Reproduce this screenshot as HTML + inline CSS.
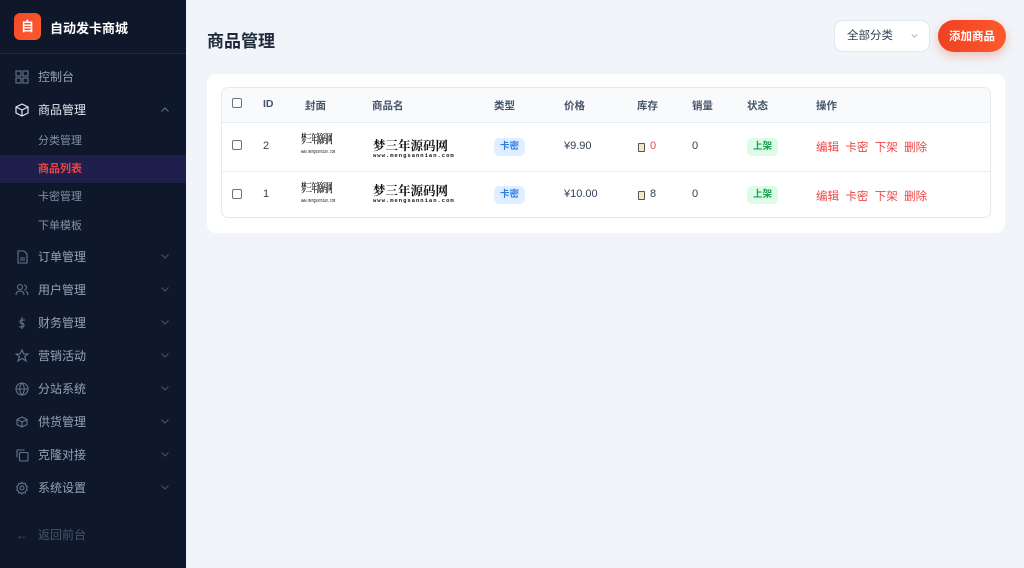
<!DOCTYPE html>
<html><head><meta charset="utf-8"><style>
*{margin:0;padding:0;box-sizing:border-box}
body{width:1024px;height:568px;overflow:hidden;background:#f1f4f9;font-family:"Liberation Sans","Noto Sans CJK SC",sans-serif;position:relative}
.sb{position:absolute;left:0;top:0;width:186px;height:568px;background:#0f172a}
.logo{position:absolute;left:14px;top:13px;width:27px;height:27px;border-radius:6px;background:linear-gradient(135deg,#f04a2a,#ff5a2c);color:#fff;font-weight:bold;font-size:13px;text-align:center;line-height:27px}
.brand{position:absolute;left:50px;top:18px;color:#fff;font-weight:bold;font-size:13px}
.div{position:absolute;left:0;top:53px;width:186px;height:1px;background:#1e293b}
.mi{position:absolute;left:0;width:186px;height:20px;color:#94a3b8;font-size:12px;line-height:20px}
.mi .ic{position:absolute;left:15px;top:3px;width:14px;height:14px}
.mi .t{position:absolute;left:38px}
.mi .ch{position:absolute;left:161px;top:7px;width:8px;height:5px}
.sub{position:absolute;left:0;width:186px;height:28px;line-height:28px;color:#8391a7;font-size:11px;padding-left:38px}
.main h1{position:absolute;left:207px;top:27px;font-size:17px;color:#1e293b;font-weight:bold}
.sel{position:absolute;left:834px;top:20px;width:96px;height:32px;background:#fff;border:1px solid #e2e8f0;border-radius:9px;font-size:11.5px;color:#334155;line-height:30px;padding-left:12px}
.btn{position:absolute;left:938px;top:20px;width:68px;height:32px;border-radius:16px;background:linear-gradient(90deg,#ee4022,#fe5a2e);color:#fff;font-size:11.5px;font-weight:bold;line-height:32px;text-align:center;box-shadow:0 4px 10px rgba(239,68,34,.3)}
.btn span{position:relative;top:1px}
.card{position:absolute;left:207px;top:74px;width:798px;height:159px;background:#fff;border-radius:9px}
.tb{position:absolute;left:221px;top:87px;width:770px;height:131px;border:1px solid #e5e9f0;border-radius:7px;overflow:hidden}
.hd{position:absolute;left:0;top:0;width:100%;height:35px;background:#f8fafc;border-bottom:1px solid #e8edf3}
.r2{position:absolute;left:0;top:83px;width:100%;height:1px;background:#e8edf3}
.c{position:absolute;font-size:11px;color:#334155;white-space:nowrap}
.h{font-weight:bold;color:#475569;font-size:10.5px}
.cb{position:absolute;width:10px;height:10px;border:1px solid #6b7280;border-radius:2px;background:#fff}
.tag{position:absolute;height:18px;line-height:18px;border-radius:5px;font-size:9.5px;font-weight:bold;padding:0 6px}
.blue{background:#e0efff;color:#2f7de0}
.green{background:#dcfce7;color:#16a34a}
.op{color:#ef4444;font-size:11.5px}
.cov{position:absolute;width:36px;height:26px;overflow:hidden;white-space:nowrap}
.cov b{display:block;font-family:"Noto Serif CJK SC",serif;font-size:12px;line-height:16px;color:#111;transform:scaleX(.47);transform-origin:0 0;letter-spacing:-1px}
.cov small{display:block;font-size:5px;font-family:"Liberation Mono",monospace;transform:scaleX(.6);transform-origin:0 0;color:#222;margin-top:2px}
.nm{position:absolute;font-size:12.5px;font-weight:bold;color:#111;font-family:"Noto Serif CJK SC",serif;line-height:13px;white-space:nowrap}
.nm small{display:block;font-size:5.5px;font-family:"Liberation Mono",monospace;letter-spacing:1px;line-height:7px}
.stk{position:absolute;width:7px;height:9px;border:1px solid #555;border-radius:1px;background:#f2e8c8}
</style></head><body>
<svg width="0" height="0" style="position:absolute"><defs><symbol id="dn" viewBox="0 0 8 5"><path d="M.5 .5L4 4L7.5 .5" fill="none" stroke="#475569" stroke-width="1"/></symbol></defs></svg>
<div class="sb">
<div class="logo">自</div><div class="brand">自动发卡商城</div><div class="div"></div>
<div class="mi" style="top:67px"><svg class="ic" viewBox="0 0 14 14" fill="none" stroke="#64748b" stroke-width="1.1"><rect x="1" y="1" width="5" height="5"/><rect x="8" y="1" width="5" height="5"/><rect x="1" y="8" width="5" height="5"/><rect x="8" y="8" width="5" height="5"/></svg><span class="t">控制台</span></div>
<div class="mi" style="top:100px;color:#e2e8f0"><svg class="ic" viewBox="0 0 14 14" fill="none" stroke="#e2e8f0" stroke-width="1.2"><path d="M7 1L13 4V10L7 13L1 10V4Z M1 4L7 7L13 4 M7 7V13"/></svg><span class="t">商品管理</span><svg class="ch" viewBox="0 0 8 5"><path d="M.5 4.5L4 1L7.5 4.5" fill="none" stroke="#64748b"/></svg></div>
<div class="sub" style="top:127px">分类管理</div>
<div class="sub" style="top:155px;background:#1e1f4b;color:#ef4444;font-weight:bold">商品列表</div>
<div class="sub" style="top:183px">卡密管理</div>
<div class="sub" style="top:212px">下单模板</div>
<div class="mi" style="top:247px"><svg class="ic" viewBox="0 0 14 14" fill="none" stroke="#64748b" stroke-width="1.1"><path d="M3 1H9L12 4V13H3Z M5 8H10 M5 10H10"/></svg><span class="t">订单管理</span><svg class="ch"><use href="#dn"/></svg></div>
<div class="mi" style="top:280px"><svg class="ic" viewBox="0 0 14 14" fill="none" stroke="#64748b" stroke-width="1.1"><circle cx="5" cy="4" r="2.5"/><path d="M1 12C1 9 3 8 5 8S9 9 9 12 M9 2A2.5 2.5 0 0 1 9 7 M11 8C12 9 13 10 13 12"/></svg><span class="t">用户管理</span><svg class="ch"><use href="#dn"/></svg></div>
<div class="mi" style="top:313px"><svg class="ic" viewBox="0 0 14 14" fill="none" stroke="#64748b" stroke-width="1.1"><path d="M7 1V13 M10 4H6A2 2 0 0 0 6 7.5H8A2 2 0 0 1 8 11H4"/></svg><span class="t">财务管理</span><svg class="ch"><use href="#dn"/></svg></div>
<div class="mi" style="top:346px"><svg class="ic" viewBox="0 0 14 14" fill="none" stroke="#64748b" stroke-width="1.1"><path d="M7 1L8.8 5H13L9.6 7.6L11 12L7 9.4L3 12L4.4 7.6L1 5H5.2Z"/></svg><span class="t">营销活动</span><svg class="ch"><use href="#dn"/></svg></div>
<div class="mi" style="top:379px"><svg class="ic" viewBox="0 0 14 14" fill="none" stroke="#64748b" stroke-width="1.1"><circle cx="7" cy="7" r="6"/><path d="M1 7H13 M7 1C4 4 4 10 7 13 M7 1C10 4 10 10 7 13"/></svg><span class="t">分站系统</span><svg class="ch"><use href="#dn"/></svg></div>
<div class="mi" style="top:412px"><svg class="ic" viewBox="0 0 14 14" fill="none" stroke="#64748b" stroke-width="1.1"><path d="M7 2L12 4.5V9.5L7 12L2 9.5V4.5Z M2 4.5L7 7L12 4.5 M7 7V12"/></svg><span class="t">供货管理</span><svg class="ch"><use href="#dn"/></svg></div>
<div class="mi" style="top:445px"><svg class="ic" viewBox="0 0 14 14" fill="none" stroke="#64748b" stroke-width="1.1"><rect x="4.5" y="4.5" width="8.5" height="8.5" rx="1"/><path d="M2 9.5V2H9.5"/></svg><span class="t">克隆对接</span><svg class="ch"><use href="#dn"/></svg></div>
<div class="mi" style="top:478px"><svg class="ic" viewBox="0 0 14 14" fill="none" stroke="#64748b" stroke-width="1.1"><circle cx="7" cy="7" r="2"/><path d="M7 1L8.3 2.8L10.5 2.3L10.9 4.5L12.8 5.6L11.7 7.5L12.8 9.4L10.9 10.5L10.5 12.7L8.3 12.2L7 14L5.7 12.2L3.5 12.7L3.1 10.5L1.2 9.4L2.3 7.5L1.2 5.6L3.1 4.5L3.5 2.3L5.7 2.8Z" transform="scale(.93) translate(.5 .2)"/></svg><span class="t">系统设置</span><svg class="ch"><use href="#dn"/></svg></div>
<div class="mi" style="top:525px;color:#475569"><span style="position:absolute;left:16px;color:#475569">←</span><span class="t">返回前台</span></div>
</div>
<div class="main">
<h1>商品管理</h1>
<div class="sel">全部分类<svg style="position:absolute;left:76px;top:13px;width:7px;height:4px" viewBox="0 0 8 5"><path d="M.5 .5L4 4L7.5 .5" fill="none" stroke="#94a3b8"/></svg></div>
<div class="btn"><span>添加商品</span></div>
<div class="card"></div>
<div class="tb"><div class="hd"></div><div class="r2"></div></div>
<div class="cb" style="left:232px;top:98px"></div>
<div class="c h" style="left:263px;top:98px">ID</div>
<div class="c h" style="left:305px;top:98px">封面</div>
<div class="c h" style="left:372px;top:98px">商品名</div>
<div class="c h" style="left:494px;top:98px">类型</div>
<div class="c h" style="left:564px;top:98px">价格</div>
<div class="c h" style="left:637px;top:98px">库存</div>
<div class="c h" style="left:692px;top:98px">销量</div>
<div class="c h" style="left:747px;top:98px">状态</div>
<div class="c h" style="left:816px;top:98px">操作</div>

<div class="cb" style="left:232px;top:140px"></div>
<div class="c" style="left:263px;top:140px">2</div>
<div class="cov" style="left:301px;top:131px"><b>梦三年源码网</b><small>www.mengsannian.com</small></div>
<div class="nm" style="left:373px;top:139px">梦三年源码网<small>www.mengsannian.com</small></div>
<div class="tag blue" style="left:494px;top:138px">卡密</div>
<div class="c" style="left:564px;top:140px">¥9.90</div>
<div class="stk" style="left:638px;top:143px"></div><div class="c" style="left:650px;top:140px;color:#ef4444">0</div>
<div class="c" style="left:692px;top:140px">0</div>
<div class="tag green" style="left:747px;top:138px">上架</div>
<div class="c op" style="left:816px;top:139px">编辑&nbsp;&nbsp;卡密&nbsp;&nbsp;下架&nbsp;&nbsp;删除</div>

<div class="cb" style="left:232px;top:189px"></div>
<div class="c" style="left:263px;top:188px">1</div>
<div class="cov" style="left:301px;top:180px"><b>梦三年源码网</b><small>www.mengsannian.com</small></div>
<div class="nm" style="left:373px;top:184px">梦三年源码网<small>www.mengsannian.com</small></div>
<div class="tag blue" style="left:494px;top:186px">卡密</div>
<div class="c" style="left:564px;top:188px">¥10.00</div>
<div class="stk" style="left:638px;top:191px"></div><div class="c" style="left:650px;top:188px">8</div>
<div class="c" style="left:692px;top:188px">0</div>
<div class="tag green" style="left:747px;top:186px">上架</div>
<div class="c op" style="left:816px;top:188px">编辑&nbsp;&nbsp;卡密&nbsp;&nbsp;下架&nbsp;&nbsp;删除</div>
</div>
</body></html>
